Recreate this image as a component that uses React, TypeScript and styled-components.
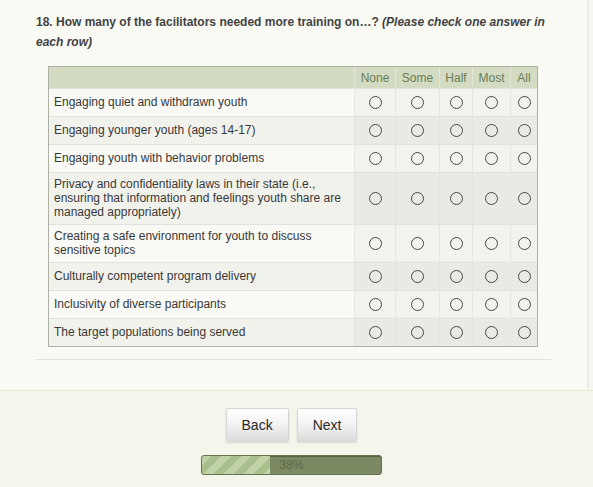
import React from "react";
import styled, { createGlobalStyle } from "styled-components";

const GlobalStyle = createGlobalStyle`
  html, body {
    margin: 0;
    padding: 0;
    background: #f4f5ee;
  }
  body {
    font-family: "Liberation Sans", Arial, sans-serif;
  }
`;

const Page = styled.div`
  display: flex;
  flex-direction: column;
  width: 593px;
  height: 487px;
  overflow: hidden;
`;

const Main = styled.main`
  width: 588px;
  height: 390px;
  box-sizing: border-box;
  background: #fafaf5;
  border-right: 1px solid #e5e7dc;
  padding: 12px 36px 0;
`;

const Question = styled.p`
  margin: 0;
  font-size: 12px;
  line-height: 20px;
  font-weight: bold;
  color: #434343;
`;

const Hint = styled.em`
  font-style: italic;
`;

const Grid = styled.table`
  margin: 14px 0 0 12px;
  width: 490px;
  table-layout: fixed;
  border-collapse: separate;
  border-spacing: 0;
  border: 1px solid #aeb0a5;
  font-size: 12px;
  line-height: 14px;
  color: #383838;
`;

const HeadCell = styled.th<{ $first?: boolean }>`
  height: 21px;
  padding: 0;
  box-sizing: border-box;
  background: #d3dbc3;
  font-weight: normal;
  color: #687b53;
  text-align: center;
  vertical-align: middle;
  border-left: ${(p) => (p.$first ? "none" : "1px solid #e2e7d8")};
`;

const Row = styled.tr<{ $alt: boolean }>`
  --label-bg: ${(p) => (p.$alt ? "#f2f2ed" : "#f9f9f5")};
  --choice-bg: ${(p) => (p.$alt ? "#eaeae4" : "#f3f3ee")};
`;

const LabelCell = styled.td`
  height: 28px;
  box-sizing: border-box;
  padding: 4px 6px 5px 5px;
  background: var(--label-bg);
  border-top: 1px solid #e2e2dc;
  vertical-align: middle;
  text-align: left;
`;

const ChoiceCell = styled.td`
  height: 28px;
  box-sizing: border-box;
  padding: 0;
  background: var(--choice-bg);
  border-top: 1px solid #e2e2dc;
  border-left: 1px solid #e4e4de;
  text-align: center;
  vertical-align: middle;
`;

const Radio = styled.input.attrs({ type: "radio" })`
  appearance: none;
  -webkit-appearance: none;
  display: block;
  margin: 0 auto;
  width: 13px;
  height: 13px;
  box-sizing: border-box;
  border: 1px solid #474747;
  border-radius: 50%;
  background: transparent;
  cursor: pointer;
  &:checked {
    background: radial-gradient(circle, #333 0 2.5px, transparent 3px);
  }
`;

const Divider = styled.hr`
  margin: 12px 0 0;
  border: none;
  height: 1px;
  background: #e3e3dd;
`;

const Footer = styled.footer`
  flex: 1;
  box-sizing: border-box;
  border-top: 1px solid #e2e8d4;
  background: #f4f6ec;
  padding: 17px 10px 0 0;
  display: flex;
  flex-direction: column;
  align-items: center;
  gap: 13px;
`;

const Buttons = styled.div`
  display: flex;
  gap: 8px;
`;

const NavButton = styled.button`
  height: 34px;
  padding: 0 15px;
  font-family: "Liberation Sans", Arial, sans-serif;
  font-size: 14px;
  color: #2a2a2a;
  background: linear-gradient(#ffffff, #f3f3f3 45%, #dcdcdc);
  border: 1px solid #d6d6d6;
  border-radius: 2px;
  box-shadow: 0 1px 2px rgba(0, 0, 0, 0.12);
  cursor: pointer;
`;

const Progress = styled.div`
  position: relative;
  width: 181px;
  height: 20px;
  box-sizing: border-box;
  border: 1px solid #67744f;
  border-radius: 3px;
  background: #7b8a62;
  box-shadow: inset 0 1px 1px rgba(0, 0, 0, 0.3);
  overflow: hidden;
`;

const Fill = styled.div`
  height: 100%;
  background: repeating-linear-gradient(
    135deg,
    #c2d2a8 0 7px,
    #aabf8e 7px 14px
  );
`;

const ProgressLabel = styled.span`
  position: absolute;
  inset: 0;
  display: flex;
  align-items: center;
  justify-content: center;
  font-size: 12px;
  color: #5b6947;
`;

const choices = ["None", "Some", "Half", "Most", "All"];
const widths = [305, 41, 44, 33, 38, 27];

const items = [
  "Engaging quiet and withdrawn youth",
  "Engaging younger youth (ages 14-17)",
  "Engaging youth with behavior problems",
  "Privacy and confidentiality laws in their state (i.e., ensuring that information and feelings youth share are managed appropriately)",
  "Creating a safe environment for youth to discuss sensitive topics",
  "Culturally competent program delivery",
  "Inclusivity of diverse participants",
  "The target populations being served",
];

export default function App() {
  const [answers, setAnswers] = React.useState<Record<number, string>>({});
  const progress = 38;

  return (
    <>
      <GlobalStyle />
      <Page>
        <Main>
          <Question>
            18. How many of the facilitators needed more training on…?{" "}
            <Hint>(Please check one answer in</Hint> <Hint>each row)</Hint>
          </Question>
          <Grid>
            <colgroup>
              {widths.map((w, i) => (
                <col key={i} style={{ width: w }} />
              ))}
            </colgroup>
            <thead>
              <tr>
                <HeadCell $first />
                {choices.map((c) => (
                  <HeadCell key={c}>{c}</HeadCell>
                ))}
              </tr>
            </thead>
            <tbody>
              {items.map((item, i) => (
                <Row key={i} $alt={i % 2 === 1}>
                  <LabelCell>{item}</LabelCell>
                  {choices.map((c) => (
                    <ChoiceCell key={c}>
                      <Radio
                        name={`q18-${i}`}
                        aria-label={c}
                        checked={answers[i] === c}
                        onChange={() => setAnswers({ ...answers, [i]: c })}
                      />
                    </ChoiceCell>
                  ))}
                </Row>
              ))}
            </tbody>
          </Grid>
          <Divider />
        </Main>
        <Footer>
          <Buttons>
            <NavButton>Back</NavButton>
            <NavButton>Next</NavButton>
          </Buttons>
          <Progress>
            <Fill style={{ width: `${progress}%` }} />
            <ProgressLabel>{progress}%</ProgressLabel>
          </Progress>
        </Footer>
      </Page>
    </>
  );
}
